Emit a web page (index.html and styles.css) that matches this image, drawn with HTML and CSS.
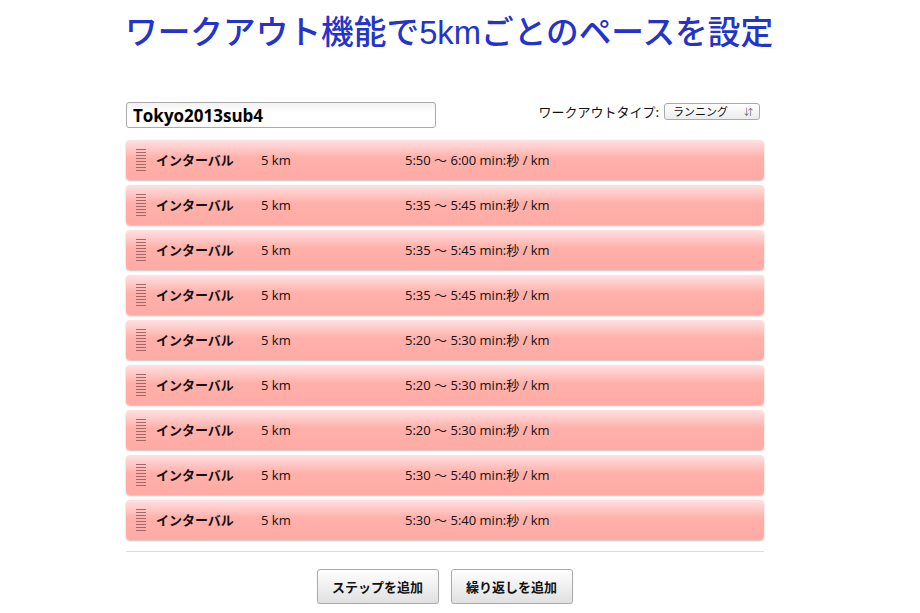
FILE: index.html
```html
<!DOCTYPE html>
<html lang="ja">
<head>
	<meta charset="UTF-8">
	<title>ワークアウト</title>
	<link rel="stylesheet" href="styles.css">
</head>
<body>
	<div class="page">
		<h1 class="title">ワークアウト機能で5kmごとのペースを設定</h1>

		<div class="head">
			<input class="name" type="text" value="Tokyo2013sub4">
			<label class="type">ワークアウトタイプ:
				<span class="select">ランニング<span class="arrows">&#8693;</span></span>
			</label>
		</div>

		<ul class="steps">
			<li class="step"><span class="handle"></span><b>インターバル</b><span class="dist">5 km</span><span class="pace">5:50 〜 6:00 min:秒 / km</span></li>
			<li class="step"><span class="handle"></span><b>インターバル</b><span class="dist">5 km</span><span class="pace">5:35 〜 5:45 min:秒 / km</span></li>
			<li class="step"><span class="handle"></span><b>インターバル</b><span class="dist">5 km</span><span class="pace">5:35 〜 5:45 min:秒 / km</span></li>
			<li class="step"><span class="handle"></span><b>インターバル</b><span class="dist">5 km</span><span class="pace">5:35 〜 5:45 min:秒 / km</span></li>
			<li class="step"><span class="handle"></span><b>インターバル</b><span class="dist">5 km</span><span class="pace">5:20 〜 5:30 min:秒 / km</span></li>
			<li class="step"><span class="handle"></span><b>インターバル</b><span class="dist">5 km</span><span class="pace">5:20 〜 5:30 min:秒 / km</span></li>
			<li class="step"><span class="handle"></span><b>インターバル</b><span class="dist">5 km</span><span class="pace">5:20 〜 5:30 min:秒 / km</span></li>
			<li class="step"><span class="handle"></span><b>インターバル</b><span class="dist">5 km</span><span class="pace">5:30 〜 5:40 min:秒 / km</span></li>
			<li class="step"><span class="handle"></span><b>インターバル</b><span class="dist">5 km</span><span class="pace">5:30 〜 5:40 min:秒 / km</span></li>
		</ul>

		<div class="actions">
			<button class="btn">ステップを追加</button>
			<button class="btn">繰り返しを追加</button>
		</div>
	</div>
</body>
</html>
```

FILE: styles.css
```css
html,
body {
	margin: 0;
	padding: 0;
	background: #fff;
}

body {
	font-family: "Open Sans", "Noto Sans CJK JP", sans-serif;
	color: #111;
}

.page {
	width: 638px;
	margin-left: 126px;
}

.title {
	margin: 12px 0 0 -1px;
	font: 500 32.7px/42px "Liberation Sans", "Noto Sans CJK JP", sans-serif;
	color: #2433c9;
	white-space: nowrap;
}

.head {
	display: flex;
	justify-content: space-between;
	align-items: flex-start;
	margin-top: 48px;
}

.name {
	box-sizing: border-box;
	width: 310px;
	height: 26px;
	padding: 0 6px;
	border: 1px solid #aaa;
	border-radius: 3px;
	background: linear-gradient(#f2f2f2, #fff 40%);
	font: 700 17px/24px "Open Sans", "Noto Sans CJK JP", sans-serif;
	color: #000;
}

.type {
	display: flex;
	align-items: center;
	gap: 5px;
	margin-top: 1px;
	margin-right: 4px;
	font: 13px/16px "Noto Sans CJK JP", sans-serif;
}

.select {
	display: flex;
	justify-content: space-between;
	box-sizing: border-box;
	width: 96px;
	height: 17px;
	padding: 0 6px 0 8px;
	border: 1px solid #aaa;
	border-radius: 3px;
	background: linear-gradient(#fff, #ececec);
	font-size: 11px;
	line-height: 15px;
}

.arrows {
	font-size: 9px;
	color: #555;
}

.steps {
	list-style: none;
	margin: 12px 0 0;
	padding: 0 0 6px;
	border-bottom: 1px solid #ddd;
}

.step {
	display: flex;
	align-items: center;
	height: 40px;
	margin-bottom: 5px;
	border-radius: 4px;
	background: linear-gradient(#ffe1e1, #ffb0aa 45%, #ffaaa5);
	box-shadow: 0 1px 2px rgba(0, 0, 0, .25);
	font-size: 13px;
	line-height: 18px;
}

.handle {
	width: 10px;
	height: 22px;
	margin: 0 10px 0 10px;
	background: repeating-linear-gradient(#a06868 0 1px, transparent 1px 3px);
}

.step b {
	width: 105px;
	font-weight: 700;
}

.dist {
	width: 144px;
}

.actions {
	display: flex;
	justify-content: center;
	gap: 12px;
	margin-top: 17px;
	padding-right: 1px;
}

.btn {
	width: 122px;
	height: 35px;
	border: 1px solid #aaa;
	border-radius: 3px;
	background: linear-gradient(#fff, #e0e0e0);
	box-shadow: 0 1px 1px rgba(0, 0, 0, .15);
	font: 700 13px "Noto Sans CJK JP", sans-serif;
	color: #111;
}
```
